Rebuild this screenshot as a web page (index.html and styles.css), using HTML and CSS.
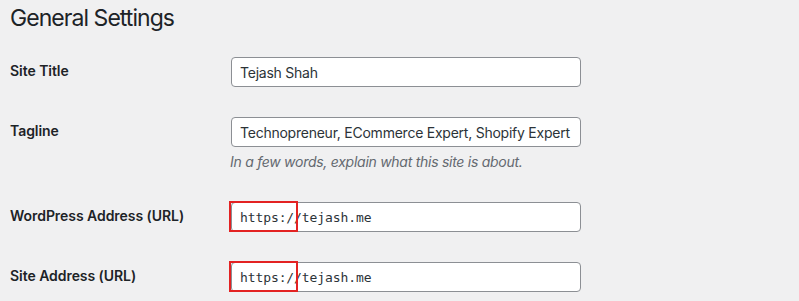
FILE: index.html
```html
<!DOCTYPE html>
<html lang="en">
<head>
  <meta charset="UTF-8" />
  <title>General Settings</title>
  <link rel="stylesheet" href="styles.css">
</head>
<body>
  <div class="wrap">
    <h1>General Settings</h1>

    <div class="form-table">
      <div class="row">
        <label class="label" for="blogname">Site Title</label>
        <div class="field">
          <input id="blogname" class="regular-text" type="text" value="Tejash Shah" />
        </div>
      </div>

      <div class="row">
        <label class="label" for="blogdescription">Tagline</label>
        <div class="field">
          <input id="blogdescription" class="regular-text" type="text" value="Technopreneur, ECommerce Expert, Shopify Expert" />
          <p class="description">In a few words, explain what this site is about.</p>
        </div>
      </div>

      <div class="row">
        <label class="label" for="siteurl">WordPress Address (URL)</label>
        <div class="field">
          <div class="marked">
            <input id="siteurl" class="regular-text code" type="text" value="https://tejash.me" />
            <span class="highlight"></span>
          </div>
        </div>
      </div>

      <div class="row">
        <label class="label" for="home">Site Address (URL)</label>
        <div class="field">
          <div class="marked">
            <input id="home" class="regular-text code" type="text" value="https://tejash.me" />
            <span class="highlight"></span>
          </div>
        </div>
      </div>
    </div>
  </div>
</body>
</html>
```

FILE: styles.css
```css
* {
  box-sizing: border-box;
  margin: 0;
  padding: 0;
}

body {
  background: #f0f0f1;
  color: #1d2327;
  font-family: Inter, "Noto Sans", sans-serif;
  font-size: 14px;
}

.wrap {
  padding: 0 10px;
}

h1 {
  font-size: 23px;
  font-weight: 400;
  line-height: 30px;
  padding: 3px 0 9px;
  letter-spacing: -0.95px;
}

.row {
  display: grid;
  grid-template-columns: 210px 1fr;
}

.label {
  padding: 20px 10px 20px 0;
  font-weight: 600;
  line-height: 1.3;
  letter-spacing: -0.05px;
}

.field {
  padding: 15px 10px;
}

.regular-text {
  display: block;
  width: 350px;
  height: 30px;
  margin: 0 1px;
  padding: 0 8px;
  border: 1px solid #8c8f94;
  border-radius: 4px;
  background: #fff;
  color: #2c3338;
  font-family: inherit;
  font-size: 14px;
  line-height: 28px;
  letter-spacing: -0.24px;
}

.regular-text.code {
  font-family: "DejaVu Sans Mono", "Liberation Mono", monospace;
  font-size: 13px;
  letter-spacing: -0.1px;
}

.description {
  margin-top: 4px;
  color: #646970;
  font-style: italic;
  line-height: 21px;
  letter-spacing: -0.27px;
}

.marked {
  position: relative;
  width: 352px;
}

.highlight {
  position: absolute;
  left: -1px;
  top: -1px;
  width: 69px;
  height: 31px;
  border: 2px solid #e32222;
}
```
